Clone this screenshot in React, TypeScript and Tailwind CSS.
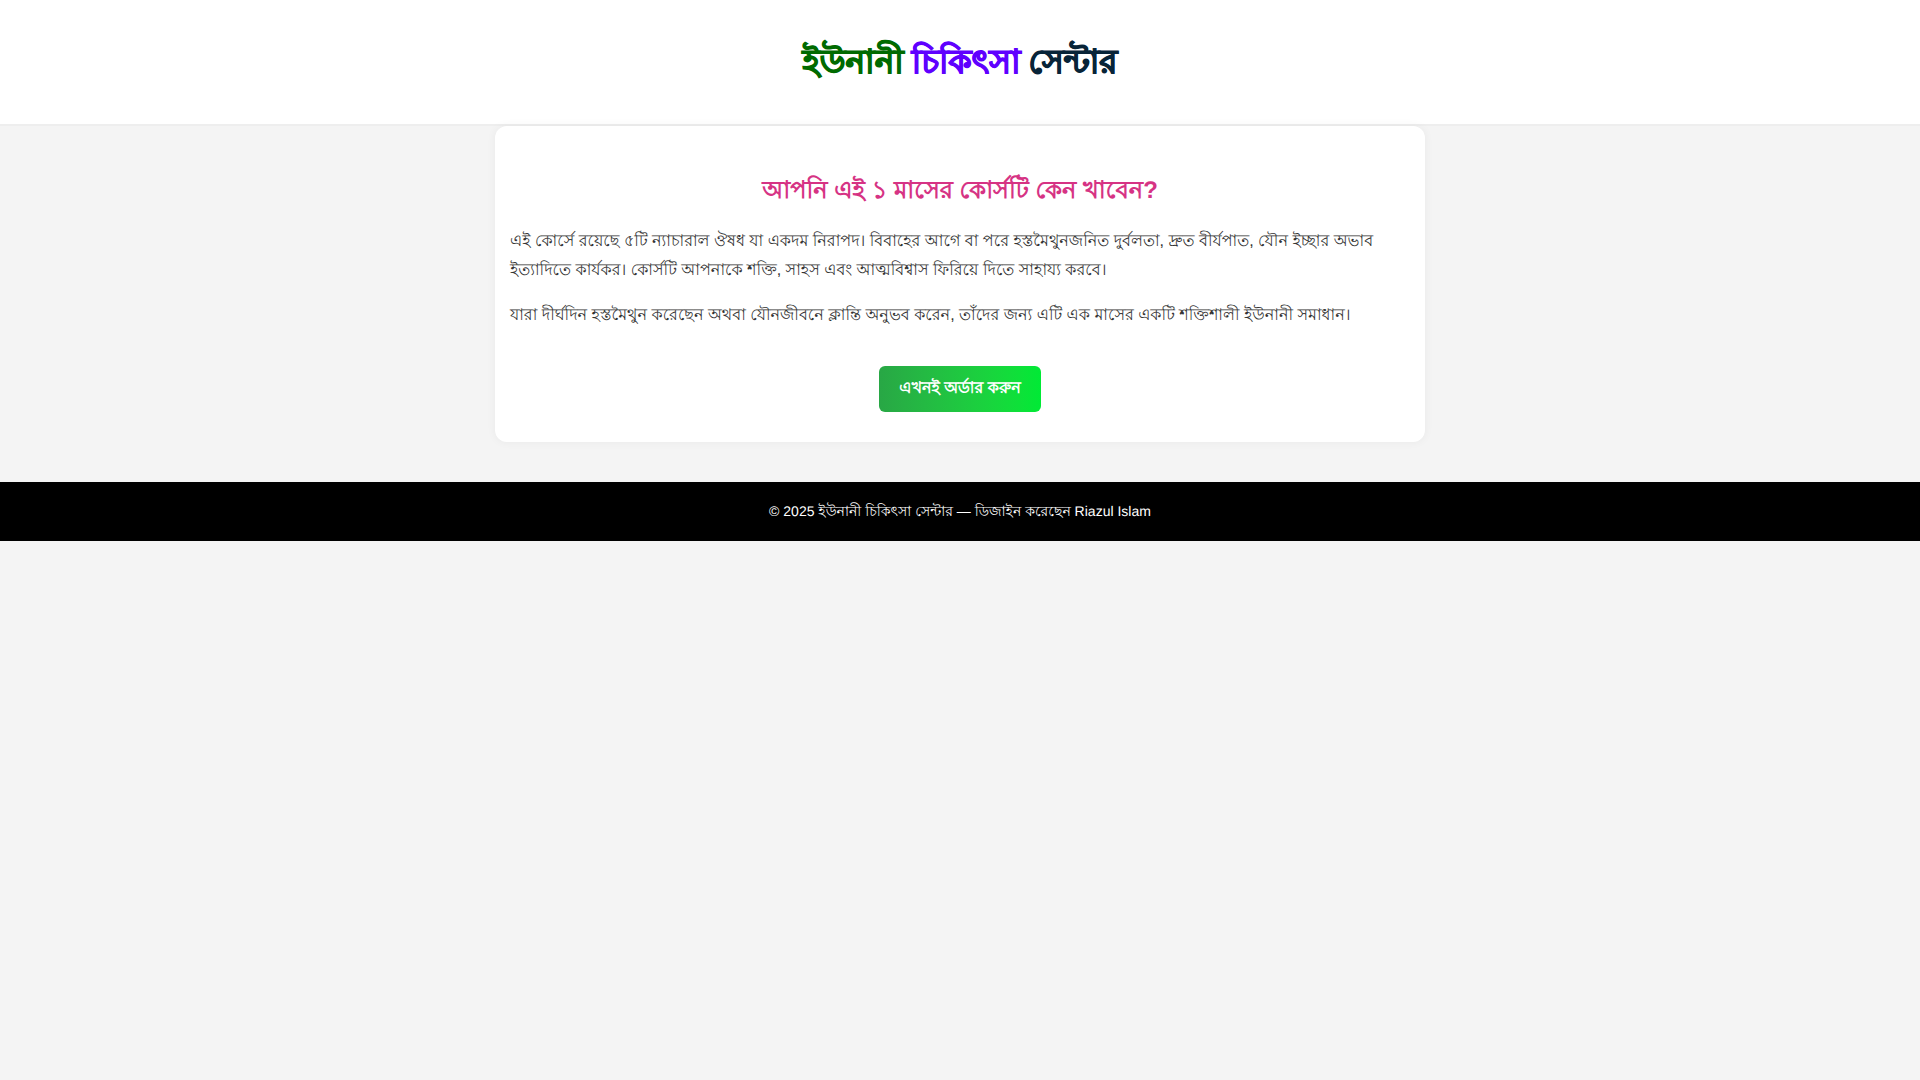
import React from 'react';

interface BrandWord {
  text: string;
  color: string;
}

const brand: BrandWord[] = [
  { text: 'ইউনানী', color: 'text-[#006a00]' },
  { text: 'চিকিৎসা', color: 'text-[#5f00ff]' },
  { text: 'সেন্টার', color: 'text-[#082438]' },
];

const paragraphs: string[] = [
  'এই কোর্সে রয়েছে ৫টি ন্যাচারাল ঔষধ যা একদম নিরাপদ। বিবাহের আগে বা পরে হস্তমৈথুনজনিত দুর্বলতা, দ্রুত বীর্যপাত, যৌন ইচ্ছার অভাব ইত্যাদিতে কার্যকর। কোর্সটি আপনাকে শক্তি, সাহস এবং আত্মবিশ্বাস ফিরিয়ে দিতে সাহায্য করবে।',
  'যারা দীর্ঘদিন হস্তমৈথুন করেছেন অথবা যৌনজীবনে ক্লান্তি অনুভব করেন, তাঁদের জন্য এটি এক মাসের একটি শক্তিশালী ইউনানী সমাধান।',
];

const App: React.FC = () => {
  return (
    <div
      lang="bn"
      className="min-h-screen bg-[#f4f4f4] font-['Liberation_Sans',sans-serif] text-[#333] [text-rendering:geometricPrecision]"
    >
      <header className="border-b-2 border-[#eee] bg-white px-4 py-10">
        <h1 className="flex justify-center gap-2 text-[33px] leading-11 font-bold [-webkit-text-stroke:1px]">
          {brand.map((word) => (
            <span key={word.text} className={word.color}>
              {word.text}
            </span>
          ))}
        </h1>
      </header>

      <main className="mx-auto max-w-[930px] rounded-xl bg-white px-[15px] pt-[45px] pb-[30px] shadow-[0_0_10px_rgba(0,0,0,0.05)]">
        <h2 className="text-center text-2xl leading-10 font-bold text-[#d63384]">আপনি এই ১ মাসের কোর্সটি কেন খাবেন?</h2>
        {paragraphs.map((paragraph) => (
          <p key={paragraph} className="mt-4 text-base leading-[29px]">
            {paragraph}
          </p>
        ))}
        <div className="mt-9 flex justify-center">
          <a
            href="#order"
            className="rounded-md bg-linear-to-r from-[#28a745] to-[#00ea35] px-5 py-3 text-base leading-[22px] font-bold text-white"
          >
            এখনই অর্ডার করুন
          </a>
        </div>
      </main>

      <footer className="mt-10 bg-black p-5 text-center text-sm leading-[19px] text-white">
        © 2025 ইউনানী চিকিৎসা সেন্টার — ডিজাইন করেছেন Riazul Islam
      </footer>
    </div>
  );
};

export default App;
